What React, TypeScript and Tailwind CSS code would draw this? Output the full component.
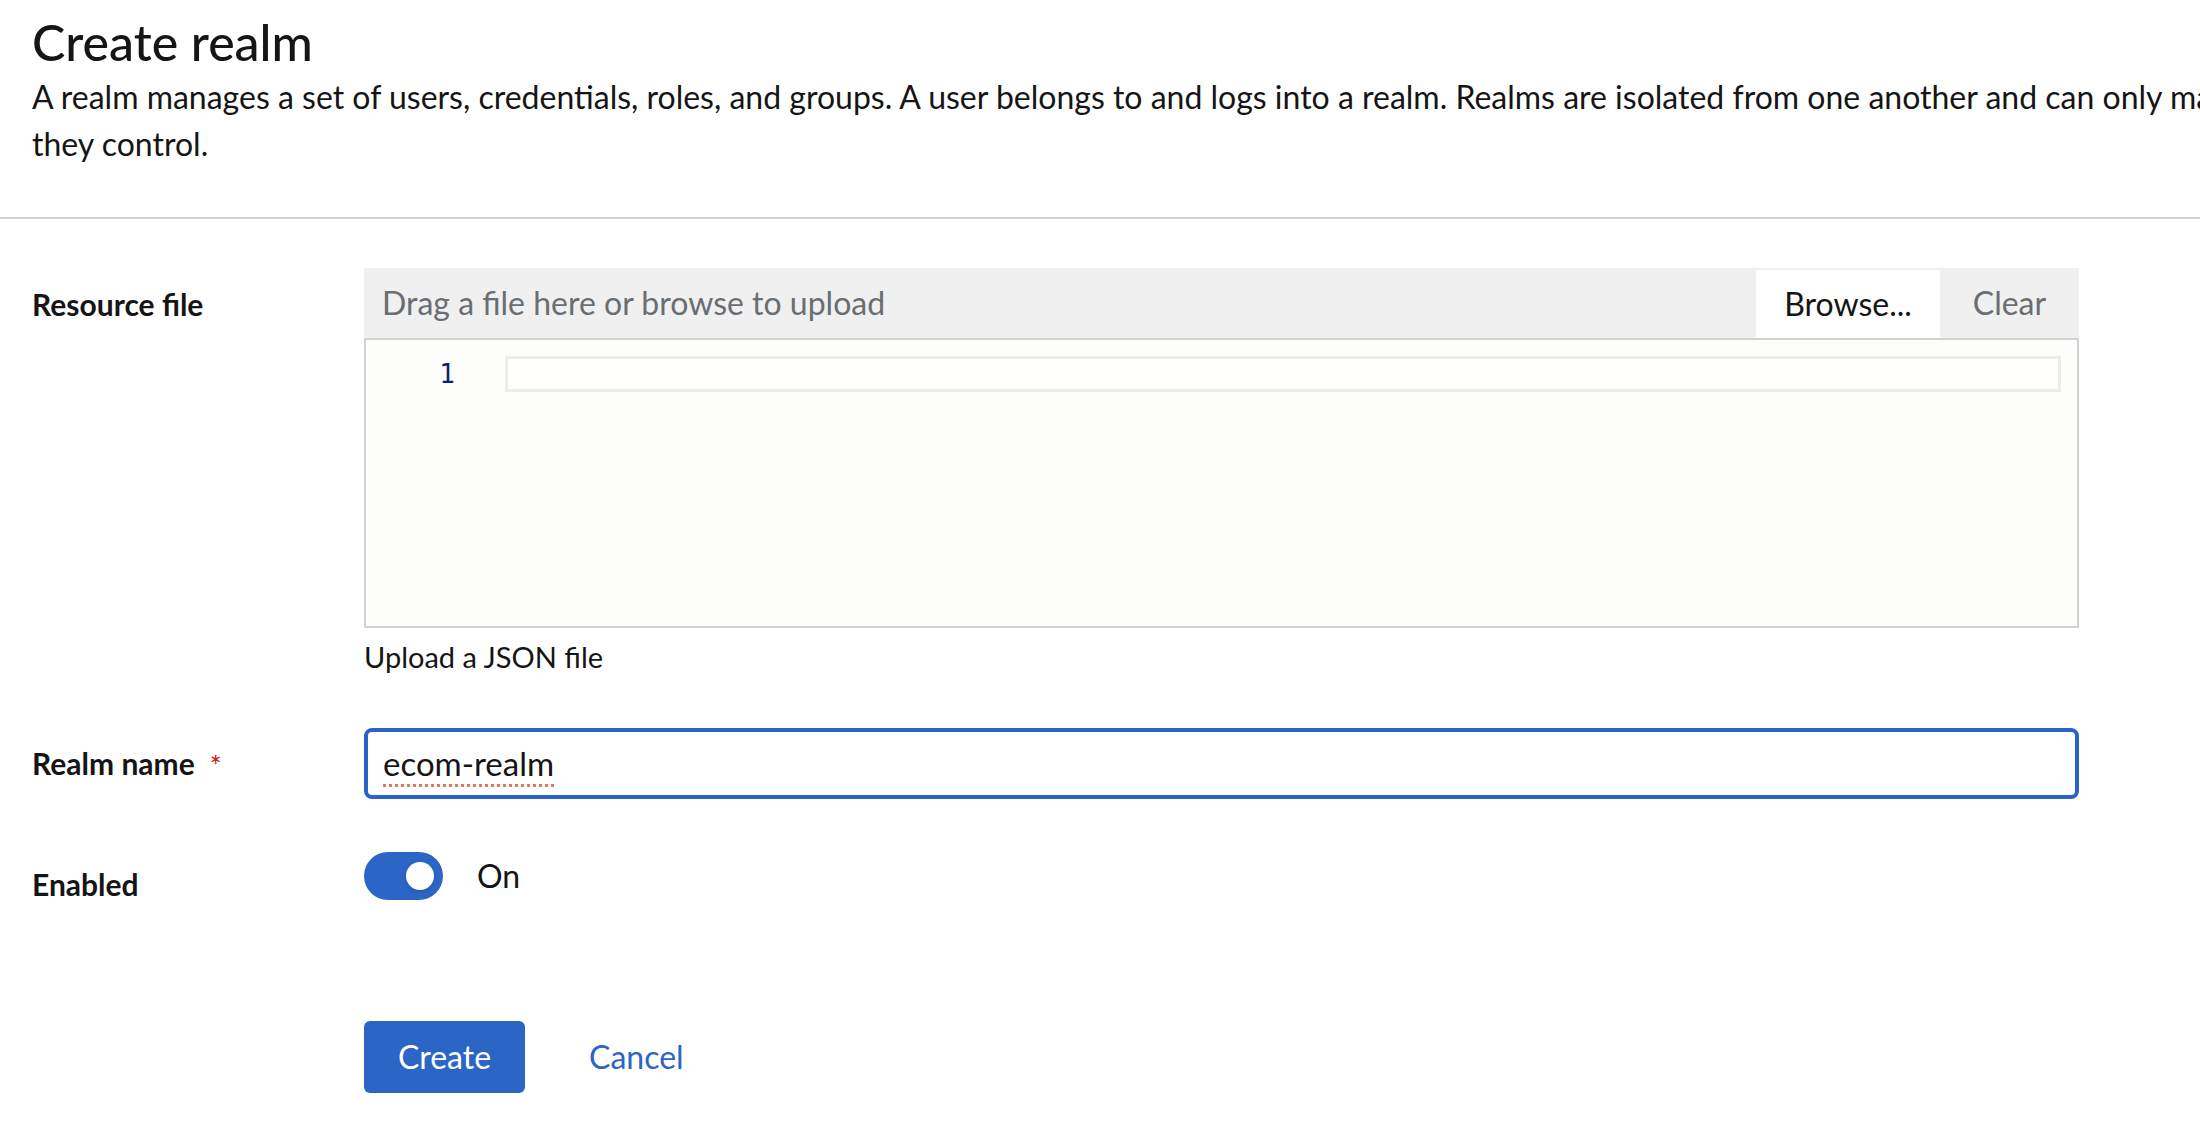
import React from "react";

export default function App() {
  return (
    <div className="w-[2200px] h-[1136px] overflow-hidden bg-white text-[#151515] font-['Lato',sans-serif]">
      {/* Header */}
      <section className="px-[32px] pt-[13px] pb-[50px] border-b-2 border-[#d2d2d2]">
        <h1 className="text-[50px] leading-[59px] font-medium">Create realm</h1>
        <p className="mt-[1px] text-[32px] leading-[47px] whitespace-nowrap">
          A realm manages a set of users, credentials, roles, and groups. A user belongs to and logs into a realm. Realms are isolated from one another and can only manage and authenticate the users that
          <br />
          they control.
        </p>
      </section>

      {/* Form */}
      <section className="px-[32px] pt-[49px]">
        {/* Resource file */}
        <div className="flex gap-[32px]">
          <div className="w-[300px] shrink-0 text-[30px] font-bold leading-[72px]">Resource file</div>
          <div className="w-[1715px]">
            <div className="flex h-[70px] bg-[#f0f0f0]">
              <div className="flex-1 flex items-center pl-[18px] text-[32px] text-[#6a6e73]">
                Drag a file here or browse to upload
              </div>
              <div className="w-[184px] mt-[2px] bg-white flex items-center justify-center text-[32px] text-[#151515]">
                Browse...
              </div>
              <div className="w-[139px] flex items-center justify-center text-[32px] text-[#6a6e73]">
                Clear
              </div>
            </div>
            <div className="h-[290px] border-2 border-[#d2d2d2] bg-[#fdfdfc]">
              <div className="flex items-center mt-[16px] h-[36px]">
                <div className="w-[139px] shrink-0 pr-[50px] text-right font-['DejaVu_Sans_Mono',monospace] text-[26px] text-[#0b216f]">
                  1
                </div>
                <div className="flex-1 mr-[16px] h-[36px] border-[3px] border-[#ececec] bg-[#fefefd]" />
              </div>
            </div>
            <p className="mt-[8px] text-[29px] leading-[42px]">Upload a JSON file</p>
          </div>
        </div>

        {/* Realm name */}
        <div className="flex gap-[32px] mt-[50px]">
          <div className="w-[300px] shrink-0 h-[71px] flex items-center text-[30px] font-bold">
            Realm name
            <span className="ml-[15px] text-[#c9190b] text-[28px] font-normal mt-[4px]">*</span>
          </div>
          <div className="w-[1715px] h-[71px] border-4 border-[#2b62c7] rounded-[8px] flex items-center pl-[15px] text-[33px]">
            <span className="underline decoration-dotted decoration-[#e8736a] decoration-[3px] underline-offset-[8px]">ecom-realm</span>
          </div>
        </div>

        {/* Enabled */}
        <div className="flex gap-[32px] mt-[53px]">
          <div className="w-[300px] shrink-0 pt-[11px] text-[30px] font-bold leading-[42px]">Enabled</div>
          <div className="flex items-center h-[48px]">
            <div className="relative w-[79px] h-[48px] rounded-full bg-[#2b65c6]">
              <div className="absolute right-[9px] top-[10px] w-[28px] h-[28px] rounded-full bg-white shadow-[0_2px_4px_rgba(0,0,0,0.15)]" />
            </div>
            <span className="ml-[34px] text-[32px]">On</span>
          </div>
        </div>

        {/* Actions */}
        <div className="flex gap-[32px] mt-[116px]">
          <div className="w-[300px] shrink-0" />
          <div className="flex items-center">
            <button className="w-[161px] h-[72px] rounded-[6px] bg-[#2b65c6] text-white text-[32px]">Create</button>
            <button className="ml-[32px] px-[32px] h-[72px] text-[#2b65c6] text-[32px]">Cancel</button>
          </div>
        </div>
      </section>
    </div>
  );
}
